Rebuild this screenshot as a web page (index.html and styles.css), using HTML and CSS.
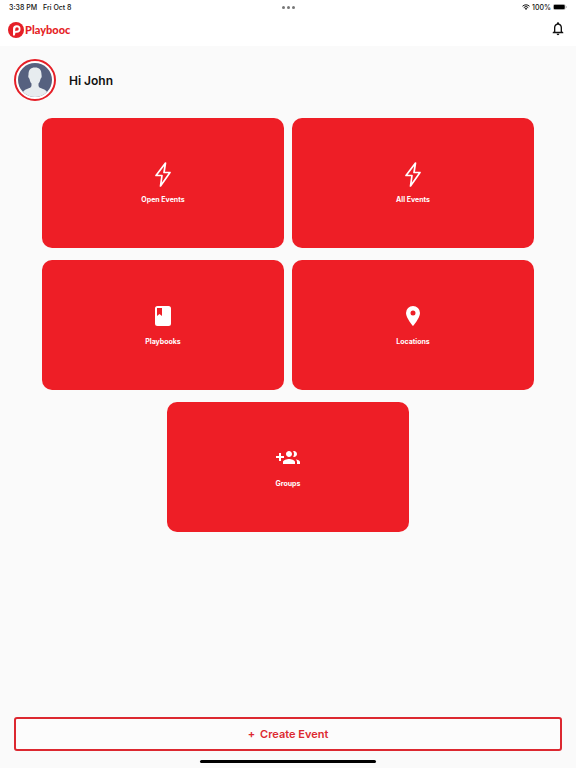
FILE: index.html
```html
<!DOCTYPE html>
<html lang="en">
<head>
    <meta charset="UTF-8">
    <meta name="viewport" content="width=device-width, initial-scale=1.0">
    <title>Playbooc</title>
    <link rel="stylesheet" href="styles.css">
</head>
<body>
    <!-- Status bar -->
    <div class="status-bar">
        <div class="status-left">
            <span>3:38 PM</span>
            <span>Fri Oct 8</span>
        </div>
        <div class="status-dots"><i></i><i></i><i></i></div>
        <div class="status-right">
            <svg class="wifi" viewBox="0 0 16 12" fill="none" stroke="#111" stroke-width="2">
                <path d="M1 4.500a10 10 0 0 1 14 0M3.500 7.200a6.400 6.400 0 0 1 9 0"/>
                <path d="M8 12 5.300 9.200a3.900 3.900 0 0 1 5.400 0z" fill="#111" stroke="none"/>
            </svg>
            <span>100%</span>
            <svg class="battery" viewBox="0 0 28 12">
                <rect x=".5" y=".5" width="24" height="11" rx="3.500" fill="none" stroke="#999"/>
                <rect x="1.500" y="1.500" width="22" height="9" rx="2.500" fill="#000"/>
                <path d="M26 4v4q1.500-.5 1.500-2T26 4z" fill="#999"/>
            </svg>
        </div>
    </div>

    <!-- Header -->
    <header class="header">
        <a class="logo" href="#">
            <svg viewBox="0 0 32 32">
                <circle cx="16" cy="16" r="16" fill="#e51f27"/>
                <path d="M10 27V14a7.500 7.500 0 1 1 7.500 7.500H15L13.500 27z" fill="#fff"/>
                <path d="M14.500 18.500V14a3.500 3.500 0 1 1 3.500 3.500h-2z" fill="#e51f27"/>
            </svg>
            <span>Playbooc</span>
        </a>
        <button class="bell" aria-label="Notifications">
            <svg viewBox="3 1 18 22" fill="#111">
                <path d="M12 22c1.100 0 2-.9 2-2h-4c0 1.100.9 2 2 2zm6-6v-5c0-3.070-1.630-5.640-4.500-6.320V4c0-.83-.67-1.500-1.500-1.500s-1.500.67-1.500 1.500v.68C7.640 5.360 6 7.920 6 11v5l-2 2v1h16v-1l-2-2zm-2 1H8v-6c0-2.480 1.510-4.500 4-4.500s4 2.020 4 4.500v6z"/>
            </svg>
        </button>
    </header>

    <main class="content">
        <div class="profile">
            <div class="avatar">
                <svg viewBox="0 0 68 68">
                    <clipPath id="face"><circle cx="34" cy="34" r="34"/></clipPath>
                    <g clip-path="url(#face)">
                        <rect width="68" height="68" fill="#56617f"/>
                        <path d="M34 9c-9 0-13 5-13 14 0 2-1 3 0 6 1 2 2 2 2 3 1 5 2 7 4 9v4c0 4-4 5-9 7-4 1-6 3-8 6v10h48V58c-2-3-4-5-8-6-5-2-9-3-9-7v-4c2-2 3-4 4-9 0-1 1-1 2-3 1-3 0-4 0-6 0-9-4-14-13-14z" fill="#e7ecef"/>
                    </g>
                </svg>
            </div>
            <h1>Hi John</h1>
        </div>

        <!-- Menu cards -->
        <nav class="cards">
            <a class="card" href="#">
                <svg viewBox="0 0 26 26" fill="none" stroke="#fff" stroke-width="1.700" stroke-linejoin="round">
                    <path d="M15.500 2 6 14.500h6L10.500 25 20 11.500h-6z"/>
                </svg>
                <span>Open Events</span>
            </a>
            <a class="card" href="#">
                <svg viewBox="0 0 26 26" fill="none" stroke="#fff" stroke-width="1.700" stroke-linejoin="round">
                    <path d="M15.500 2 6 14.500h6L10.500 25 20 11.500h-6z"/>
                </svg>
                <span>All Events</span>
            </a>
            <a class="card" href="#">
                <svg viewBox="0 0 26 26" fill="#fff">
                    <path fill-rule="evenodd" d="M7.500 3h11a2.500 2.500 0 0 1 2.500 2.500v15a2.500 2.500 0 0 1-2.500 2.500h-11A2.500 2.500 0 0 1 5 20.500v-15A2.500 2.500 0 0 1 7.500 3zM7 5v8l2.500-2 2.500 2V5z"/>
                </svg>
                <span>Playbooks</span>
            </a>
            <a class="card" href="#">
                <svg viewBox="0 0 26 26" fill="#fff">
                    <path fill-rule="evenodd" d="M13 3a7 7 0 0 0-7 7c0 5 7 13 7 13s7-8 7-13a7 7 0 0 0-7-7zm0 4.500a2.500 2.500 0 1 1 0 5 2.500 2.500 0 0 1 0-5z"/>
                </svg>
                <span>Locations</span>
            </a>
            <a class="card" href="#">
                <svg viewBox="-1 -1 26 26" fill="#fff">
                    <path d="M8 10H5V7H3v3H0v2h3v3h2v-3h3v-2zm10 1c1.660 0 2.990-1.340 2.990-3S19.660 5 18 5c-.32 0-.63.050-.91.140.57.810.9 1.790.9 2.860s-.34 2.040-.9 2.860c.28.090.59.140.91.140zm-5 0c1.660 0 2.990-1.340 2.990-3S14.660 5 13 5c-1.660 0-3 1.340-3 3s1.340 3 3 3zm6.620 2.160c.83.730 1.380 1.660 1.380 2.840v2h3v-2c0-1.540-2.370-2.490-4.380-2.840zM13 13c-2 0-6 1-6 3v2h12v-2c0-2-4-3-6-3z"/>
                </svg>
                <span>Groups</span>
            </a>
        </nav>
    </main>

    <footer class="footer">
        <button class="create-button"><span>+</span>Create Event</button>
        <div class="home-bar"></div>
    </footer>
</body>
</html>
```
FILE: styles.css
```css
* {
    box-sizing: border-box;
}

body {
    margin: 0;
    min-height: 100vh;
    display: flex;
    flex-direction: column;
    background-color: #fafafa;
    color: #111;
    font-family: "Inter", "Liberation Sans", sans-serif;
}

svg {
    display: block;
}

a {
    text-decoration: none;
}

/* Status bar */
.status-bar {
    display: grid;
    grid-template-columns: 1fr auto 1fr;
    align-items: center;
    height: 14px;
    padding: 0 9px;
    background-color: #fff;
    font-size: 7px;
    font-weight: 500;
}

.status-left {
    display: flex;
    gap: 6px;
}

.status-dots {
    display: flex;
    gap: 2px;
}

.status-dots i {
    width: 3px;
    height: 3px;
    border-radius: 50%;
    background-color: #777;
}

.status-right {
    display: flex;
    justify-content: flex-end;
    align-items: center;
    gap: 2px;
}

.wifi {
    width: 8px;
    height: 6px;
}

.battery {
    width: 14px;
    height: 6px;
}

/* Header */
.header {
    display: flex;
    justify-content: space-between;
    align-items: center;
    height: 32px;
    padding: 0 12px 0 8px;
    background-color: #fff;
}

.logo {
    display: flex;
    align-items: center;
    gap: 1px;
    color: #e51f27;
    font-family: "Lato", sans-serif;
    font-size: 11px;
    font-weight: 900;
    line-height: 12px;
}

.logo svg {
    width: 16px;
    height: 16px;
}

.bell {
    padding: 0 0 4px;
    border: none;
    background: none;
    cursor: pointer;
}

.bell svg {
    width: 12px;
    height: 15px;
}

/* Profile */
.content {
    flex: 1;
}

.profile {
    display: flex;
    align-items: center;
    gap: 13px;
    padding: 13px 14px 17px;
}

.avatar {
    width: 42px;
    height: 42px;
    padding: 2px;
    border: 2px solid #e51f27;
    border-radius: 50%;
    background-color: #fff;
}

.profile h1 {
    margin: 0;
    font-size: 12px;
    font-weight: 600;
}

/* Cards */
.cards {
    display: flex;
    flex-wrap: wrap;
    justify-content: center;
    gap: 12px 8px;
    padding: 0 42px;
}

.card {
    display: flex;
    flex-direction: column;
    align-items: center;
    justify-content: center;
    gap: 8px;
    width: calc(50% - 4px);
    height: 130px;
    border-radius: 10px;
    background-color: #ee1e26;
    color: #fff;
    font-size: 7px;
    font-weight: 700;
    line-height: 10px;
}

.card svg {
    width: 26px;
    height: 26px;
}

/* Footer */
.footer {
    display: flex;
    flex-direction: column;
    align-items: center;
    gap: 9px;
    padding: 0 14px 5px;
}

.create-button {
    display: flex;
    align-items: center;
    justify-content: center;
    gap: 5px;
    width: 100%;
    height: 34px;
    border: 2px solid #dc2830;
    border-radius: 3px;
    background-color: #fcfcfc;
    color: #dc2830;
    font-family: inherit;
    font-size: 11px;
    font-weight: 600;
    cursor: pointer;
}

.home-bar {
    width: 32%;
    height: 3px;
    border-radius: 2px;
    background-color: #000;
}
```
